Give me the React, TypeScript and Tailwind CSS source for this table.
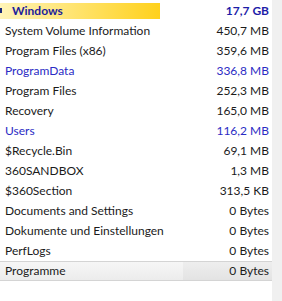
import React from 'react';

type Entry = { name: string; size: string; tone?: 'blue' };

const entries: Entry[] = [
  { name: 'System Volume Information', size: '450,7 MB' },
  { name: 'Program Files (x86)', size: '359,6 MB' },
  { name: 'ProgramData', size: '336,8 MB', tone: 'blue' },
  { name: 'Program Files', size: '252,3 MB' },
  { name: 'Recovery', size: '165,0 MB' },
  { name: 'Users', size: '116,2 MB', tone: 'blue' },
  { name: '$Recycle.Bin', size: '69,1 MB' },
  { name: '360SANDBOX', size: '1,3 MB' },
  { name: '$360Section', size: '313,5 KB' },
  { name: 'Documents and Settings', size: '0 Bytes' },
  { name: 'Dokumente und Einstellungen', size: '0 Bytes' },
  { name: 'PerfLogs', size: '0 Bytes' },
];

export default function App() {
  return (
    <div
      className="flex w-[282px] h-[301px] bg-white text-[12px] leading-[20px] text-[#1b1b1b] overflow-hidden"
      style={{ fontFamily: 'Lato, "Liberation Sans", sans-serif' }}
    >
      <div className="w-[272px] pt-[1px]">
        {/* root folder with usage bar */}
        <div className="relative flex h-[20px] items-center bg-[linear-gradient(90deg,#fff4b8,#ffd11c)] bg-[length:160px_16px] bg-no-repeat bg-left">
          <span className="absolute left-0 top-[7px] w-[2px] h-[5px] bg-[#1c2a78]" />
          <span className="flex-1 pl-[12px] font-bold text-[#1d1d9c]">Windows</span>
          <span className="pr-[3px] font-bold text-[#1d1da8]">17,7 GB</span>
        </div>

        {entries.map((e) => (
          <div key={e.name} className="flex h-[20px] items-center whitespace-nowrap">
            <span className={`flex-1 pl-[5px] ${e.tone === 'blue' ? 'text-[#2b2bc4]' : ''}`}>{e.name}</span>
            <span className={`pr-[3px] ${e.tone === 'blue' ? 'text-[#2b2bc4]' : ''}`}>{e.size}</span>
          </div>
        ))}

        {/* hovered row */}
        <div className="flex h-[20px] border-y border-[#d4d4d4]">
          <span className="w-[183px] pl-[5px] leading-[18px] bg-[linear-gradient(#f6f6f6,#ececec)]">Programme</span>
          <span className="flex-1 pr-[3px] text-right leading-[18px] bg-[linear-gradient(#eeeeee,#e3e3e3)]">0 Bytes</span>
        </div>
      </div>
      <div className="flex-1 bg-[#f0f0f0]" />
    </div>
  );
}
